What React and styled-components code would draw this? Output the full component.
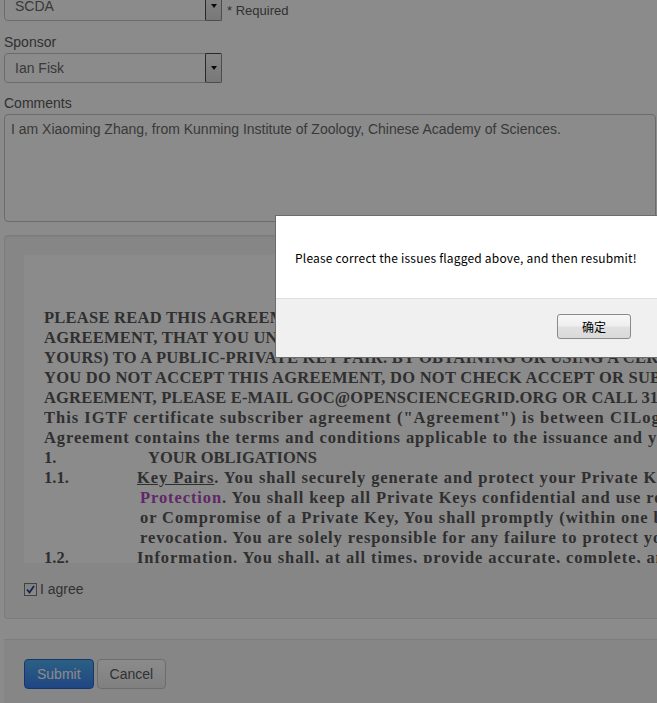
import React from 'react';
import styled, { createGlobalStyle } from 'styled-components';

const GlobalStyle = createGlobalStyle`
  html, body { margin: 0; padding: 0; overflow: hidden; background: #fff; }
  body { font-family: "Liberation Sans", Arial, sans-serif; font-size: 14px; color: #555; }
`;

const Page = styled.div`
  width: 760px;
  padding-left: 4px;
  margin-top: -9px;
`;

const InlineField = styled.div`
  display: flex;
  align-items: flex-end;
  gap: 5px;
`;

const Select = styled.div`
  box-sizing: border-box;
  width: 218px;
  height: 30px;
  display: flex;
  align-items: center;
  justify-content: space-between;
  padding-left: 10px;
  border: 1px solid #c4c4c4;
  border-radius: 4px;
  background: #fff;
  color: #6a6a6a;
  font-size: 14px;
`;

const SelectArrow = styled.span`
  box-sizing: border-box;
  width: 17px;
  align-self: stretch;
  margin: -1px -1px -1px 0;
  display: flex;
  align-items: center;
  justify-content: center;
  border: 1px solid;
  border-color: #4a4a4a #8c8c8c #8c8c8c #4a4a4a;
  border-radius: 2px;
  background: linear-gradient(#f7f7f7, #dcdcdc);
  &::after {
    content: '';
    border-left: 3.5px solid transparent;
    border-right: 3.5px solid transparent;
    border-top: 4px solid #111;
  }
`;

const Hint = styled.span`
  font-size: 13px;
  line-height: 20px;
  color: #5a5a5a;
`;

const Label = styled.label`
  display: block;
  margin: ${p => p.$top}px 0 1px;
  line-height: 20px;
  font-size: 14px;
  color: #5a5a5a;
`;

const TextArea = styled.textarea`
  box-sizing: border-box;
  display: block;
  width: 652px;
  height: 108px;
  margin: 0;
  padding: 5px 6px;
  border: 1px solid #c4c4c4;
  border-radius: 4px;
  resize: none;
  font-family: "Liberation Sans", Arial, sans-serif;
  font-size: 14px;
  line-height: 18px;
  color: #6a6a6a;
  background: #fff;
  outline: none;
`;

const Well = styled.div`
  margin-top: 13px;
  padding: 19px;
  border: 1px solid #e3e3e3;
  border-right: none;
  border-radius: 4px 0 0 4px;
  background: #f6f6f6;
  box-shadow: inset 0 1px 1px rgba(0, 0, 0, 0.05);
`;

const Frame = styled.div`
  box-sizing: border-box;
  height: 308px;
  overflow: hidden;
  padding: 53px 0 0 20px;
  background: #fff;
  font-family: "Liberation Serif", "Times New Roman", serif;
  font-weight: bold;
  font-size: 16.5px;
  line-height: 20px;
  color: #575757;
`;

const Line = styled.div`
  white-space: nowrap;
  letter-spacing: ${p => p.$ls || 0}px;
  padding-left: ${p => p.$indent || 0}px;
`;

const NumRow = styled.div`
  display: flex;
  white-space: nowrap;
`;

const Num = styled.span`
  flex: 0 0 93px;
`;

const Heading = styled.span`
  padding-left: 11px;
`;

const Clause = styled.span`
  letter-spacing: 0.9px;
`;

const Under = styled.span`
  text-decoration: underline;
`;

const Purple = styled.span`
  color: #b048c0;
`;

const AgreeRow = styled.label`
  display: flex;
  align-items: center;
  gap: 3px;
  margin-top: 16px;
  line-height: 20px;
  font-size: 14px;
  color: #5a5a5a;
`;

const CheckBox = styled.span`
  box-sizing: border-box;
  width: 13px;
  height: 13px;
  display: flex;
  align-items: center;
  justify-content: center;
  border: 1px solid #7a7a7a;
  background: linear-gradient(#ececec, #fff);
`;

const FormActions = styled.div`
  margin-top: 20px;
  padding: 19px 20px;
  border-top: 1px solid #e5e5e5;
  background: #f6f6f6;
  display: flex;
  gap: 3px;
`;

const Button = styled.button`
  box-sizing: border-box;
  height: 30px;
  padding: 4px 12px;
  border-radius: 4px;
  font-family: "Liberation Sans", Arial, sans-serif;
  font-size: 14px;
  line-height: 20px;
  border: 1px solid ${p => (p.$primary ? '#2a64c8' : '#c8c8c8')};
  color: ${p => (p.$primary ? '#fff' : '#5a5a5a')};
  background: ${p =>
    p.$primary
      ? 'linear-gradient(#50b0f0, #3a80f0)'
      : 'linear-gradient(#ffffff, #ebebeb)'};
`;

const Overlay = styled.div`
  position: fixed;
  inset: 0;
  background: rgba(0, 0, 0, 0.455);
`;

const Dialog = styled.div`
  position: fixed;
  left: 275px;
  top: 215px;
  width: 420px;
  border: 1px solid #6c6c6c;
  background: #fff;
  font-family: "Noto Sans CJK SC", "Liberation Sans", sans-serif;
  font-size: 12px;
  color: #000;
`;

const DialogBody = styled.div`
  box-sizing: border-box;
  height: 82px;
  padding: 34px 19px 0;
  line-height: 16px;
  letter-spacing: 0.19px;
  white-space: nowrap;
`;

const DialogFooter = styled.div`
  box-sizing: border-box;
  height: 59px;
  padding: 15px 0 0 281px;
  border-top: 1px solid #dfdfdf;
  background: #f0f0f0;
  display: flex;
  align-items: flex-start;
`;

const DialogButton = styled.button`
  box-sizing: border-box;
  width: 74px;
  height: 25px;
  padding: 0;
  border: 1px solid #8a8a8a;
  border-radius: 3px;
  background: linear-gradient(#f7f7f7 0%, #efefef 45%, #e0e0e0 55%, #d9d9d9 100%);
  font-family: "Noto Sans CJK SC", sans-serif;
  font-size: 12px;
  color: #000;
`;

export default function App() {
  return (
    <>
      <GlobalStyle />
      <Page>
        <InlineField>
          <Select>
            SCDA
            <SelectArrow />
          </Select>
          <Hint>* Required</Hint>
        </InlineField>

        <Label $top={11}>Sponsor</Label>
        <Select>
          Ian Fisk
          <SelectArrow />
        </Select>

        <Label $top={10}>Comments</Label>
        <TextArea
          readOnly
          defaultValue="I am Xiaoming Zhang, from Kunming Institute of Zoology, Chinese Academy of Sciences."
        />

        <Well>
          <Frame>
            <Line $ls={0.25}>PLEASE READ THIS AGREEMENT CAREFULLY BEFORE OBTAINING A CERTIFICATE. BY</Line>
            <Line $ls={0.25}>AGREEMENT, THAT YOU UNDERSTAND IT, AND THAT YOU AGREE TO BE BOUND</Line>
            <Line $ls={0.25}>YOURS) TO A PUBLIC-PRIVATE KEY PAIR. BY OBTAINING OR USING A CERTIFICATE</Line>
            <Line $ls={0.25}>YOU DO NOT ACCEPT THIS AGREEMENT, DO NOT CHECK ACCEPT OR SUBMIT</Line>
            <Line $ls={0.18}>AGREEMENT, PLEASE E-MAIL GOC@OPENSCIENCEGRID.ORG OR CALL 317-278-9699.</Line>
            <Line $ls={1.0}>This IGTF certificate subscriber agreement ("Agreement") is between CILogon</Line>
            <Line $ls={0.9}>Agreement contains the terms and conditions applicable to the issuance and your use</Line>
            <NumRow>
              <Num>1.</Num>
              <Heading>YOUR OBLIGATIONS</Heading>
            </NumRow>
            <NumRow>
              <Num>1.1.</Num>
              <Clause>
                <Under>Key Pairs</Under>. You shall securely generate and protect your Private Key
              </Clause>
            </NumRow>
            <Line $indent={96} $ls={0.9}>
              <Purple>Protection</Purple>. You shall keep all Private Keys confidential and use reasonable
            </Line>
            <Line $indent={96} $ls={0.9}>or Compromise of a Private Key, You shall promptly (within one business day)</Line>
            <Line $indent={96} $ls={0.9}>revocation. You are solely responsible for any failure to protect your</Line>
            <NumRow>
              <Num>1.2.</Num>
              <Clause>Information. You shall, at all times, provide accurate, complete, and true</Clause>
            </NumRow>
          </Frame>
          <AgreeRow>
            <CheckBox>
              <svg width="9" height="9" viewBox="0 0 9 9">
                <path d="M1 4.5 L3.5 7.5 L8 1" fill="none" stroke="#2c3f8a" strokeWidth="1.8" />
              </svg>
            </CheckBox>
            I agree
          </AgreeRow>
        </Well>

        <FormActions>
          <Button $primary>Submit</Button>
          <Button>Cancel</Button>
        </FormActions>
      </Page>

      <Overlay />
      <Dialog role="alertdialog">
        <DialogBody>Please correct the issues flagged above, and then resubmit!</DialogBody>
        <DialogFooter>
          <DialogButton>确定</DialogButton>
        </DialogFooter>
      </Dialog>
    </>
  );
}
